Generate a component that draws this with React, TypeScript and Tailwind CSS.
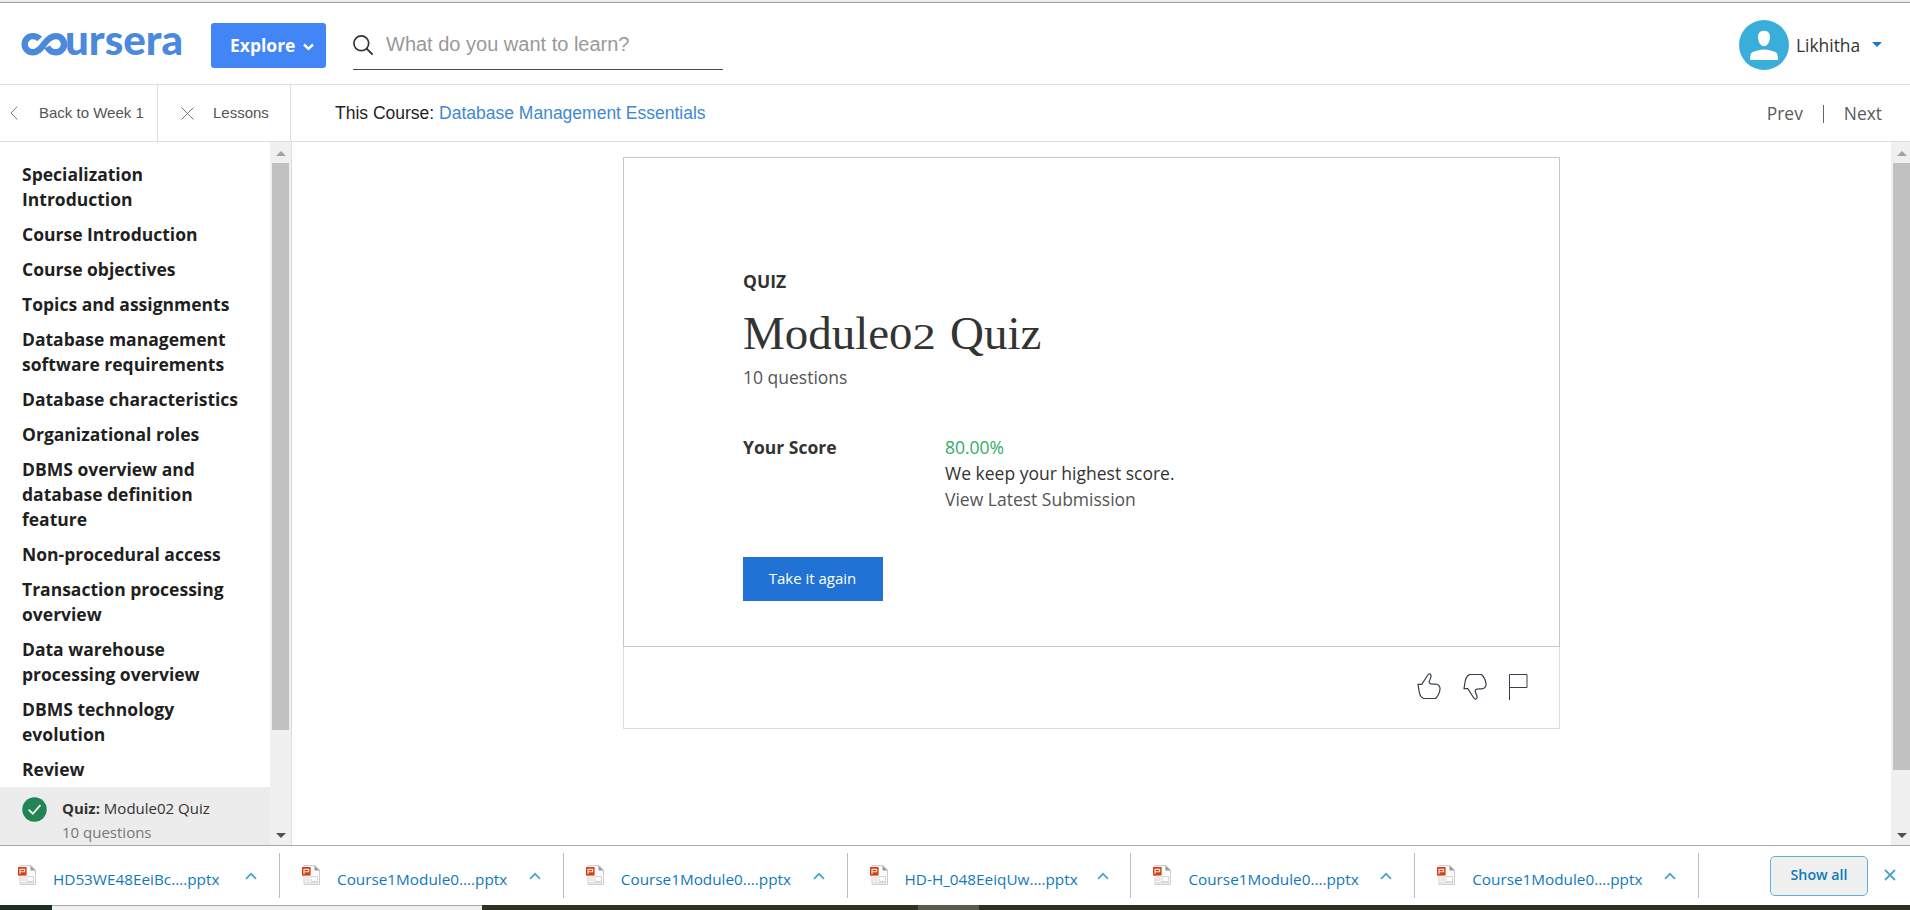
const lessons = [
  'Specialization Introduction',
  'Course Introduction',
  'Course objectives',
  'Topics and assignments',
  'Database management software requirements',
  'Database characteristics',
  'Organizational roles',
  'DBMS overview and database definition feature',
  'Non-procedural access',
  'Transaction processing overview',
  'Data warehouse processing overview',
  'DBMS technology evolution',
  'Review',
];

const downloads = [
  'HD53WE48EeiBc....pptx',
  'Course1Module0....pptx',
  'Course1Module0....pptx',
  'HD-H_048EeiqUw....pptx',
  'Course1Module0....pptx',
  'Course1Module0....pptx',
];

function Logo() {
  return (
    <svg width="168" height="64" viewBox="0 -16 168 64" aria-label="coursera" className="shrink-0">
      <path
        d="M20.300 11C18.500 9 16.300 8.100 13.400 8.100a8 8 0 0 0 0 16.200c5 0 7.600-3.200 11.200-8.200S31.500 8.100 36.500 8.100a8 8 0 0 1 0 16.200c-3.900 0-7-2-8.700-5.400"
        transform="translate(-.6 0)"
        fill="none"
        stroke="#4a89dc"
        strokeWidth="6.400"
      />
      <text
        x="45"
        y="26.600"
        fill="#4a89dc"
        fontSize="41"
        fontWeight="900"
        textLength="118"
        lengthAdjust="spacingAndGlyphs"
        className="font-['Lato',sans-serif]"
      >
        ursera
      </text>
    </svg>
  );
}

function Header() {
  return (
    <header className="flex h-[82px] shrink-0 items-center border-b border-[#dedede] pr-[28px] pl-[20px]">
      <Logo />
      <button className="mt-[4px] ml-[23px] flex h-[45px] w-[115px] shrink-0 items-center rounded-[3px] bg-[#4285f7] pl-[19px] text-[17.5px] font-bold text-white">
        Explore
        <svg width="11" height="8" viewBox="0 0 11 8" className="mt-[3px] ml-[8px]">
          <path d="M1 1.500l4.500 4.300L10 1.500" fill="none" stroke="white" strokeWidth="2.500" />
        </svg>
      </button>
      <div className="mb-[14px] ml-[27px] flex h-[49px] w-[370px] self-end border-b border-[#4a4a4a] font-['Liberation_Sans',sans-serif]">
        <svg width="21" height="21" viewBox="0 0 21 21" className="mt-[14px]">
          <circle cx="8.300" cy="8.300" r="7.400" fill="none" stroke="#333" strokeWidth="1.700" />
          <path d="M13.400 13.400l6.200 6.200" stroke="#333" strokeWidth="2" />
        </svg>
        <span className="mt-[10px] ml-[12px] text-[20px] leading-[26px] text-[#999]">What do you want to learn?</span>
      </div>
      <div className="mt-[3px] ml-auto flex items-center">
        <svg width="50" height="50" viewBox="0 0 50 50">
          <circle cx="25" cy="25" r="25" fill="#3aaedb" />
          <path d="M25 10.800c4.200 0 6.200 2.800 6 6.600-.2 4.400-2.600 8.600-6 8.600s-5.800-4.200-6-8.600c-.2-3.800 1.800-6.600 6-6.600z" fill="white" />
          <path d="M11 40c0-4.600.6-7.100 3.400-8.200 3-1.100 6.600-2.200 10.600-2.200s7.600 1.100 10.600 2.200c2.800 1.100 3.400 3.600 3.400 8.200z" fill="white" />
        </svg>
        <span className="ml-[7px] w-[65px] text-[17.4px] text-[#333]">Likhitha</span>
        <svg width="10" height="5" viewBox="0 0 10 5" className="-mt-[2px] ml-[11px]">
          <path d="M0 0h10L5 5z" fill="#2073d9" />
        </svg>
      </div>
    </header>
  );
}

function CourseNav() {
  return (
    <nav className="flex h-[57px] shrink-0 items-center border-b border-[#dedede]">
      <div className="flex h-full w-[158px] items-center border-r border-[#dedede] pl-[10px] font-['Liberation_Sans',sans-serif] text-[15px] text-[#555]">
        <svg width="8" height="14" viewBox="0 0 8 14">
          <path d="M7.300.5L1 7l6.300 6.500" fill="none" stroke="#777" />
        </svg>
        <span className="ml-[21px] whitespace-nowrap">Back to Week 1</span>
      </div>
      <div className="flex h-full w-[133px] items-center border-r border-[#dedede] pl-[23px] font-['Liberation_Sans',sans-serif] text-[15px] text-[#555]">
        <svg width="13" height="13" viewBox="0 0 13 13">
          <path d="M.5.5l12 12M12.500.5l-12 12" stroke="#777" />
        </svg>
        <span className="ml-[19px]">Lessons</span>
      </div>
      <p className="ml-[44px] font-['Liberation_Sans',sans-serif] text-[17.5px] text-[#1f1f1f]">
        This Course: <a className="text-[#4189cf]">Database Management Essentials</a>
      </p>
      <div className="ml-auto flex items-center pr-[28px] text-[17.4px] text-[#5a5a5a]">
        <span>Prev</span>
        <i className="mt-[2px] mr-[20px] ml-[20px] h-[18px] w-px bg-[#666]" />
        <span>Next</span>
      </div>
    </nav>
  );
}

function Arrow({ up }: { up?: boolean }) {
  return (
    <svg width="10" height="5" viewBox="0 0 10 5" className="shrink-0">
      {up ? <path d="M0 5h10L5 0z" fill="#a3a3a3" /> : <path d="M0 0h10L5 5z" fill="#505050" />}
    </svg>
  );
}

function Scrollbar({ thumb }: { thumb: string }) {
  return (
    <div className="flex h-full w-[21px] shrink-0 flex-col items-center bg-[#f0f0f0] pt-[9px] pb-[7px]">
      <Arrow up />
      <div className={`mt-[7px] w-[17px] shrink-0 bg-[#c1c1c1] ${thumb}`} />
      <div className="mt-auto flex">
        <Arrow />
      </div>
    </div>
  );
}

function Sidebar() {
  return (
    <aside className="flex h-full w-[292px] shrink-0 border-r border-[#dedede]">
      <div className="h-full w-[270px] shrink-0 overflow-hidden">
        <ul className="flex flex-col gap-[10px] pt-[20px] pr-[30px] pl-[22px] text-[17.5px] leading-[25px] font-bold text-[#1f1f1f]">
          {lessons.map((l) => (
            <li key={l}>{l}</li>
          ))}
        </ul>
        <div className="mt-[5px] flex h-[60px] bg-[#ececec] pt-[10px] pl-[22px] text-[15px]">
          <svg width="25" height="25" viewBox="0 0 25 25">
            <circle cx="12.500" cy="12.500" r="12.200" fill="#208454" />
            <path d="M6.600 12.700l4.200 4 7.600-8.600" fill="none" stroke="white" strokeWidth="1.700" />
          </svg>
          <div className="-mt-px ml-[15px] leading-[24px] text-[#333]">
            <p>
              <b>Quiz:</b> Module02 Quiz
            </p>
            <p className="text-[#777]">10 questions</p>
          </div>
        </div>
      </div>
      <Scrollbar thumb="h-[567px]" />
    </aside>
  );
}

const thumbPath =
  'M1 11.300h3.800L10.600 2.200c.7-1.100 1.500-1.700 2.200-1.300 1.300.7 1.400 2.200 1 3.500-.5 1.800-1.900 3.400-1.500 5.200.3 1.500 2 1.500 3.600 1.500h2.600c3 0 4.700 2.200 4.500 5.200-.3 3.400-1.900 6.700-4.500 9.200H6.500c-2.600-1.300-3.700-3.500-4.200-6z';

function QuizCard() {
  return (
    <section className="mt-[15px] flex h-[572px] w-[937px] shrink-0 flex-col border border-[#dedede]">
      <div className="-mx-px -mt-px flex h-[490px] shrink-0 flex-col border border-[#c7c7c7] pl-[119px] text-[17.5px] leading-[26px] text-[#333]">
        <h4 className="mt-[110px] font-bold">QUIZ</h4>
        <h1 className="mt-[11px] h-[56px] font-['Liberation_Serif',serif] text-[47px] leading-[56px]">
          Module<span className="inline-block w-[49px] origin-left scale-x-[1.3] text-[36px]">02</span> Quiz
        </h1>
        <p className="mt-[3px] text-[#555]">10 questions</p>
        <div className="mt-[44px] flex">
          <b className="w-[202px]">Your Score</b>
          <div>
            <p className="text-[#33ad66]">80.00%</p>
            <p>We keep your highest score.</p>
            <p className="text-[#555]">View Latest Submission</p>
          </div>
        </div>
        <button className="mt-[45px] h-[44px] w-[140px] bg-[#2073d5] pr-px pb-[2px] text-[15px] text-white">Take it again</button>
      </div>
      <div className="flex flex-1 items-center justify-end gap-[21px] pr-[31px] pb-[2px]">
        <svg width="25" height="27" viewBox="0 0 25 27" fill="none" stroke="#37404a" strokeWidth="1.200">
          <path d={thumbPath} />
        </svg>
        <svg width="25" height="27" viewBox="0 0 25 27" fill="none" stroke="#37404a" strokeWidth="1.200">
          <g transform="matrix(1 0 0 -1 0 27)">
            <path d={thumbPath} />
          </g>
        </svg>
        <svg width="19" height="26" viewBox="0 0 19 26" fill="none" stroke="#37404a">
          <path d="M.5 26V.5h17.500v13H.5" />
        </svg>
      </div>
    </section>
  );
}

function PptIcon() {
  return (
    <svg width="18" height="20" viewBox="0 0 18 20" className="-mt-[2px] shrink-0">
      <path d="M2 .5h11l4.500 4.500v14.500H2z" fill="#fbfbfb" stroke="#cfcfcf" />
      <path d="M12.500.5v5h5z" fill="#9a9a9e" />
      <path d="M3.500 12.500h4M3.500 15h4M2.500 17.800h14" stroke="#dcdcdc" strokeWidth="1.400" />
      <path d="M9 11.500h6.500v5H9z" fill="white" stroke="#d4d4d4" />
      <path d="M0 2h8.600v8.600H0z" fill="#d2401a" />
      <path d="M2 9V4.400h4.600v2.400H2" fill="none" stroke="#ffe3d8" strokeWidth="1.100" />
    </svg>
  );
}

function DownloadBar() {
  return (
    <footer className="flex h-[60px] shrink-0 items-center border-t border-[#aaa] pr-[14px] text-[#0f78be]">
      {downloads.map((d, i) => (
        <div key={i} className="flex h-[45px] w-[283.8px] shrink-0 items-center border-r border-[#bdbdbd] pl-[22px] first:w-[280px] first:pl-[18px]">
          <PptIcon />
          <span className="mt-[7px] ml-[17px] w-[192px] text-[15.3px] whitespace-nowrap">{d}</span>
          <svg width="12" height="8" viewBox="0 0 12 8">
            <path d="M1 6.800l5-5 5 5" fill="none" stroke="#4ba3d3" strokeWidth="1.800" />
          </svg>
        </div>
      ))}
      <button className="ml-auto h-[40px] w-[98px] rounded-[5px] border border-[#62aeda] bg-[#f0f0f0] pb-[2px] text-[14.2px] font-semibold">
        Show all
      </button>
      <svg width="12" height="12" viewBox="0 0 12 12" className="-mt-[2px] ml-[16px]">
        <path d="M1 1l10 10M11 1L1 11" stroke="#4ba3d3" strokeWidth="1.800" />
      </svg>
    </footer>
  );
}

export default function App() {
  return (
    <div className="flex h-[910px] w-[1910px] flex-col overflow-hidden bg-white font-['Open_Sans',sans-serif]">
      <div className="h-[3px] shrink-0 border-b border-[#9c9c9c] bg-[#eee]" />
      <Header />
      <CourseNav />
      <div className="flex h-[703px] shrink-0">
        <Sidebar />
        <main className="flex h-full flex-1 overflow-hidden pl-[331px]">
          <QuizCard />
        </main>
        <div className="w-[19px] overflow-hidden">
          <Scrollbar thumb="h-[607px]" />
        </div>
      </div>
      <DownloadBar />
      <div className="flex h-[5px] shrink-0">
        <i className="w-[52px] bg-[#1b2e22]" />
        <i className="w-[430px] border-t border-[#aaa] bg-[#f0f0f0]" />
        <i className="w-[436px] bg-[#313120]" />
        <i className="w-[61px] bg-[#5b5b4b]" />
        <i className="flex-1 bg-[#2e2f20]" />
      </div>
    </div>
  );
}
